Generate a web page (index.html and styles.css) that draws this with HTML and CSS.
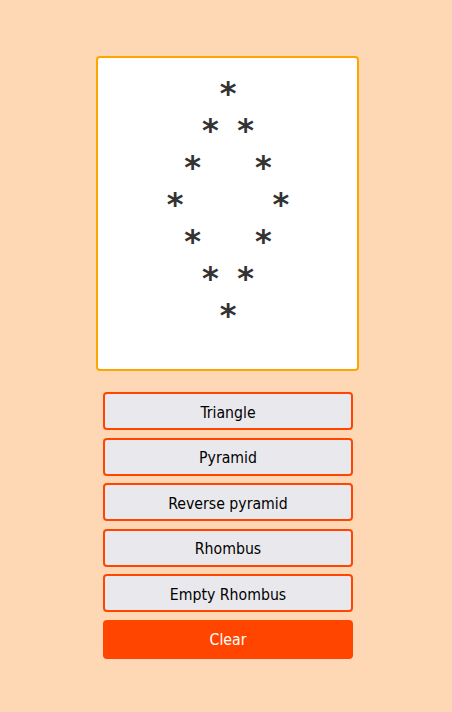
FILE: index.html
```html
<!DOCTYPE html>
<html>
<head>
<meta charset="utf-8">
<link rel="stylesheet" href="styles.css">
</head>
<body>
<div class="app">
  <div class="canvas">
    <div class="pattern">
      <div class="row"><span class="c4">*</span></div>
      <div class="row"><span class="c3">*</span><span class="c5">*</span></div>
      <div class="row"><span class="c2">*</span><span class="c6">*</span></div>
      <div class="row"><span class="c1">*</span><span class="c7">*</span></div>
      <div class="row"><span class="c2">*</span><span class="c6">*</span></div>
      <div class="row"><span class="c3">*</span><span class="c5">*</span></div>
      <div class="row"><span class="c4">*</span></div>
    </div>
  </div>
  <div class="buttons">
    <button class="btn">Triangle</button>
    <button class="btn">Pyramid</button>
    <button class="btn">Reverse pyramid</button>
    <button class="btn">Rhombus</button>
    <button class="btn">Empty Rhombus</button>
    <button class="btn clear">Clear</button>
  </div>
</div>
</body>
</html>
```
FILE: styles.css
```css
html, body {
  margin: 0;
  padding: 0;
  background: #fed8b4;
  height: 100%;
}
body {
  font-family: "DejaVu Sans Condensed", "DejaVu Sans", Verdana, sans-serif;
}
.app {
  display: flex;
  flex-direction: column;
  align-items: center;
  padding-top: 56px;
  padding-left: 2px;
}
.canvas {
  box-sizing: border-box;
  width: 263px;
  height: 315px;
  background: #fff;
  border: 2px solid #ffa500;
  border-radius: 4px;
  display: flex;
  justify-content: center;
  padding-top: 17px;
  padding-left: 2px;
}
.pattern {
  display: flex;
  flex-direction: column;
}
.row {
  display: grid;
  grid-template-columns: repeat(7, 17.67px);
  height: 37px;
  align-items: center;
}
.row span {
  font-family: "DejaVu Sans", sans-serif;
  font-weight: bold;
  font-size: 32px;
  color: #333;
  text-align: center;
  line-height: 37px;
}
.c1 { grid-column: 1; }
.c2 { grid-column: 2; }
.c3 { grid-column: 3; }
.c4 { grid-column: 4; }
.c5 { grid-column: 5; }
.c6 { grid-column: 6; }
.c7 { grid-column: 7; }
.buttons {
  display: flex;
  flex-direction: column;
  gap: 7.5px;
  margin-top: 21px;
  margin-left: 2px;
  width: 250px;
}
.btn {
  box-sizing: border-box;
  height: 38px;
  width: 250px;
  background: #e9e9ed;
  border: 2px solid #ff4500;
  border-radius: 4px;
  font-family: "DejaVu Sans Condensed", "DejaVu Sans", Verdana, sans-serif;
  font-size: 15.7px;
  color: #000;
  padding: 2px 0 0;
}
.clear {
  background: #ff4500;
  color: #fff;
  border-color: #ff4500;
  height: 39px;
  padding: 0;
}
```
